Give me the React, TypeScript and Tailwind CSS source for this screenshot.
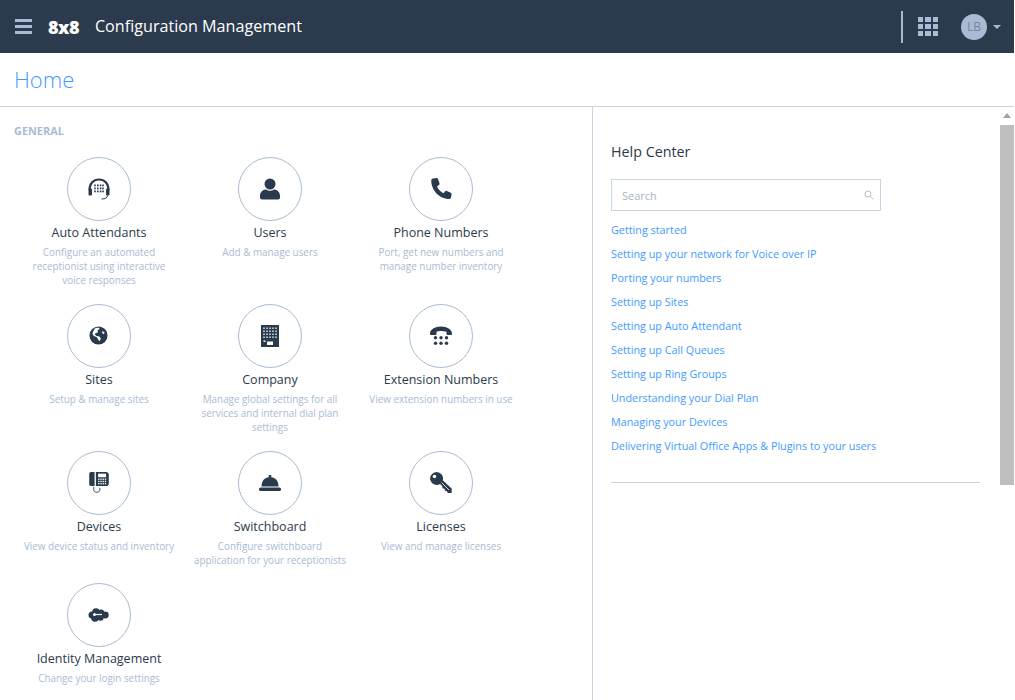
import { ReactNode } from "react";

const ink = "#2a3a4d";

type Item = { name: string; desc: string; icon: ReactNode };

const items: Item[] = [
  {
    name: "Auto Attendants",
    desc: "Configure an automated receptionist using interactive voice responses",
    icon: (
      <svg width="24" height="24" viewBox="0 0 24 24" fill={ink}>
        <path d="M2.500 13C2.500 6.500 6.500 2.500 12 2.500S21.500 6.500 21.500 13" fill="none" stroke={ink} strokeWidth="2.200" />
        <rect x="1.500" y="11.500" width="3.500" height="7" rx="1" />
        <rect x="19" y="11.500" width="3.500" height="7" rx="1" />
        <path d="M20.500 18.500c0 2.500-2.500 3.500-6 3.500" fill="none" stroke={ink} strokeWidth="1" />
        {[7.500, 10.500, 13.500].map((y) =>
          [8, 10.800, 13.600, 16].map((x) => <rect key={`${x}-${y}`} x={x - 0.8} y={y} width="1.600" height="1.800" />),
        )}
      </svg>
    ),
  },
  {
    name: "Users",
    desc: "Add & manage users",
    icon: (
      <svg width="22" height="24" viewBox="0 0 22 24" fill={ink}>
        <circle cx="11" cy="7" r="5.500" />
        <path d="M1 19c0-4 3-6.500 6-6.500 1.200.8 2.500 1.200 4 1.200s2.800-.4 4-1.200c3 0 6 2.500 6 6.500v1.500c0 1.200-1 2-2 2H3c-1 0-2-.8-2-2z" />
      </svg>
    ),
  },
  {
    name: "Phone Numbers",
    desc: "Port, get new numbers and manage number inventory",
    icon: (
      <svg width="24" height="24" viewBox="0 0 24 24" fill={ink}>
        <path d="M4 1.500 7.500 1c.8 0 1.300.4 1.500 1l1.500 4.300c.2.600 0 1.200-.5 1.600L8 9.500c1 2.500 3.500 5.500 6.500 6.800l1.700-2c.4-.5 1-.6 1.600-.4l4 1.800c.6.300.9.900.8 1.500l-.6 3.400c-.2.800-.8 1.400-1.700 1.400C10 22 1.900 12.500 2.300 3.200 2.400 2.300 3.100 1.600 4 1.500z" />
      </svg>
    ),
  },
  {
    name: "Sites",
    desc: "Setup & manage sites",
    icon: (
      <svg width="19" height="19" viewBox="0 0 20 20">
        <circle cx="10" cy="10" r="9.500" fill={ink} />
        <path d="M6 2.500 9.500 1.500 11.500 3 9 4.500 9.500 6.500 7 7.500 6 9 8 10.500 11 11 12.500 13.500 11 16 9.500 14 8 11.500 5 10.500 3.500 7.500zM14 5l2.500 2-1 1.500L14 7.500z" fill="#fff" />
      </svg>
    ),
  },
  {
    name: "Company",
    desc: "Manage global settings for all services and internal dial plan settings",
    icon: (
      <svg width="18" height="22" viewBox="0 0 18 22">
        <rect width="18" height="22" fill={ink} />
        {[2.500, 5.500, 8.500, 11.500].map((y) =>
          [3, 6, 9, 12, 15].map((x) => <rect key={`${x}-${y}`} x={x - 0.7} y={y} width="1.400" height="1.400" fill="#fff" />),
        )}
        <rect x="6" y="16.500" width="6" height="3.500" fill="#fff" />
        <rect x="2.500" y="15.500" width="2" height="1.400" fill="#fff" />
      </svg>
    ),
  },
  {
    name: "Extension Numbers",
    desc: "View extension numbers in use",
    icon: (
      <svg width="22" height="20" viewBox="0 0 22 20" fill={ink}>
        <path d="M0 7.500C0 3.500 5 .5 11 .5s11 3 11 7v.5c0 .6-.4 1-1 1h-3.500c-.6 0-1-.4-1-1V5.800C14.500 5.200 12.800 5 11 5s-3.500.2-4.500.8V8c0 .6-.4 1-1 1H1c-.6 0-1-.4-1-1z" />
        {[11.800, 17.300].map((y) =>
          [5.500, 11, 16.500].map((x) => <circle key={`${x}-${y}`} cx={x} cy={y} r="1.700" />),
        )}
      </svg>
    ),
  },
  {
    name: "Devices",
    desc: "View device status and inventory",
    icon: (
      <svg width="20" height="24" viewBox="0 0 22 27" fill={ink}>
        <path d="M0 3c0-1 .8-2 2-2h4v16H2c-1.200 0-2-1-2-2z" />
        <path d="M7.500 1H19c1.500 0 3 1.200 3 3v10c0 1.800-1.500 3-3 3H7.500z" />
        <rect x="10" y="3" width="9" height="4" fill="#fff" />
        {[8.500, 11, 13.500].map((y) =>
          [10, 12.500, 15, 17.500].map((x) => <rect key={`${x}-${y}`} x={x} y={y} width="1.500" height="1.500" fill="#fff" />),
        )}
        <path d="M5 18v3c0 4 7 4 7 0v-2" fill="none" stroke={ink} strokeWidth="1" />
      </svg>
    ),
  },
  {
    name: "Switchboard",
    desc: "Configure switchboard application for your receptionists",
    icon: (
      <svg width="22" height="16" viewBox="0 0 22 16" fill={ink}>
        <rect x="9.500" y="0" width="3" height="2" rx="1" />
        <path d="M2.500 11.500C2.500 5.500 6 2 11 2s8.500 3.500 8.500 9.500z" />
        <rect x="0" y="12.500" width="22" height="3.500" rx="1.500" />
      </svg>
    ),
  },
  {
    name: "Licenses",
    desc: "View and manage licenses",
    icon: (
      <svg width="24" height="24" viewBox="0 0 24 24" fill={ink}>
        <path d="M7.500 1a6.500 6.500 0 0 1 6.300 8.200l9 8.500-.2 4.300h-3.800l-1-2-1.800-.3-.5-2-2-.5-.2-2-2.200-2.200A6.500 6.500 0 1 1 7.500 1z" />
        <circle cx="5.500" cy="5.500" r="1.800" fill="#fff" />
        <path d="m12.500 11.500 7.500 7.500" stroke="#fff" strokeWidth="0.800" />
      </svg>
    ),
  },
  {
    name: "Identity Management",
    desc: "Change your login settings",
    icon: (
      <svg width="21" height="14" viewBox="0 0 21 14" fill={ink}>
        <circle cx="4" cy="7" r="3.500" />
        <circle cx="8" cy="4" r="3.800" />
        <circle cx="13" cy="4.800" r="3.200" />
        <circle cx="17.300" cy="7" r="3.400" />
        <circle cx="12.500" cy="9.500" r="3.200" />
        <circle cx="7" cy="10" r="3.800" />
        <circle cx="6.500" cy="6.500" r="1.500" fill="#fff" />
        <rect x="7.500" y="5.900" width="6.500" height="1.200" fill="#fff" />
      </svg>
    ),
  },
];

const links = [
  "Getting started",
  "Setting up your network for Voice over IP",
  "Porting your numbers",
  "Setting up Sites",
  "Setting up Auto Attendant",
  "Setting up Call Queues",
  "Setting up Ring Groups",
  "Understanding your Dial Plan",
  "Managing your Devices",
  "Delivering Virtual Office Apps & Plugins to your users",
];

export default function App() {
  return (
    <div className="flex h-[700px] w-[1014px] flex-col overflow-hidden bg-white font-['Open_Sans',sans-serif]">
      <header className="flex h-[53px] shrink-0 items-center bg-[#2b3a4d] pl-[15px] text-white">
        <div className="flex w-[17px] flex-col gap-[3px]">
          <span className="h-[3px] bg-[#a9bbd4]" />
          <span className="h-[3px] bg-[#a9bbd4]" />
          <span className="h-[3px] bg-[#a9bbd4]" />
        </div>
        <span className="ml-4 text-[18px] leading-none font-black tracking-[-0.5px]">8x8</span>
        <span className="ml-4 text-[16.150px]">Configuration Management</span>
        <div className="ml-auto flex items-center">
          <span className="h-8 w-[2px] bg-[#a9bbd4]" />
          <div className="ml-[15px] grid h-[19px] w-5 grid-cols-3 grid-rows-3 gap-[2px]">
            {Array.from({ length: 9 }).map((_, i) => (
              <span key={i} className="bg-[#a9bbd4]" />
            ))}
          </div>
          <div className="ml-[23px] flex h-[26px] w-[26px] items-center justify-center rounded-full bg-[#a9bbd4] text-[12px] text-[#7b8797]">
            LB
          </div>
          <span className="mr-[13px] ml-[6px] h-0 w-0 border-x-[4px] border-t-[4px] border-x-transparent border-t-[#a9bbd4]" />
        </div>
      </header>

      <div className="flex h-[54px] shrink-0 items-center border-b border-[#c9d6e6] pl-[14px]">
        <h1 className="text-[22px] font-light text-[#3f9bff]">Home</h1>
      </div>

      <div className="flex min-h-0 flex-1">
        <main className="w-[593px] shrink-0 border-r border-[#c9d6e6] pt-[17px] pl-[13px]">
          <h2 className="ml-px text-[10.900px] leading-[14px] font-bold text-[#a9bbd4]">GENERAL</h2>
          <div className="mt-[19px] grid w-[513px] grid-cols-3">
            {items.map((item) => (
              <div key={item.name} className="flex flex-col items-center pb-[16.800px] text-center">
                <div className="flex h-16 w-16 items-center justify-center rounded-full border border-[#a9bbd4]">{item.icon}</div>
                <div className="mt-[2px] pl-px text-[12.500px] leading-5 text-[#2b3a4d]">{item.name}</div>
                <p className="mt-[2px] w-[156px] pl-px text-[9.900px] leading-[14px] text-[#a9bbd4]">{item.desc}</p>
              </div>
            ))}
          </div>
        </main>

        <aside className="flex-1 pt-[36px] pl-[18px]">
          <h2 className="text-[14.300px] leading-[18px] text-[#2b3a4d]">Help Center</h2>
          <div className="mt-[18px] flex h-8 w-[270px] items-center justify-between border border-[#c9d6e6] pr-[6px] pl-[10px]">
            <span className="pt-[2px] text-[11px] text-[#a9b4c2]">Search</span>
            <svg width="10" height="10" viewBox="0 0 10 10" fill="none" stroke="#b5bfcb" strokeWidth="1">
              <circle cx="4" cy="4" r="3" />
              <path d="m6.300 6.300 3 3" />
            </svg>
          </div>
          <ul className="mt-[7px] w-[369px] border-b border-[#c9d6e6] pb-6">
            {links.map((link) => (
              <li key={link} className="text-[10.800px] leading-6 text-[#3f9bff]">
                {link}
              </li>
            ))}
          </ul>
        </aside>

        <div className="flex w-[14px] shrink-0 flex-col items-center">
          <span className="mt-[6px] h-0 w-0 border-x-[4px] border-b-[5px] border-x-transparent border-b-[#a3a3a3]" />
          <span className="mt-[7px] h-[360px] w-[14px] bg-[#bfbfbf]" />
        </div>
      </div>
    </div>
  );
}
